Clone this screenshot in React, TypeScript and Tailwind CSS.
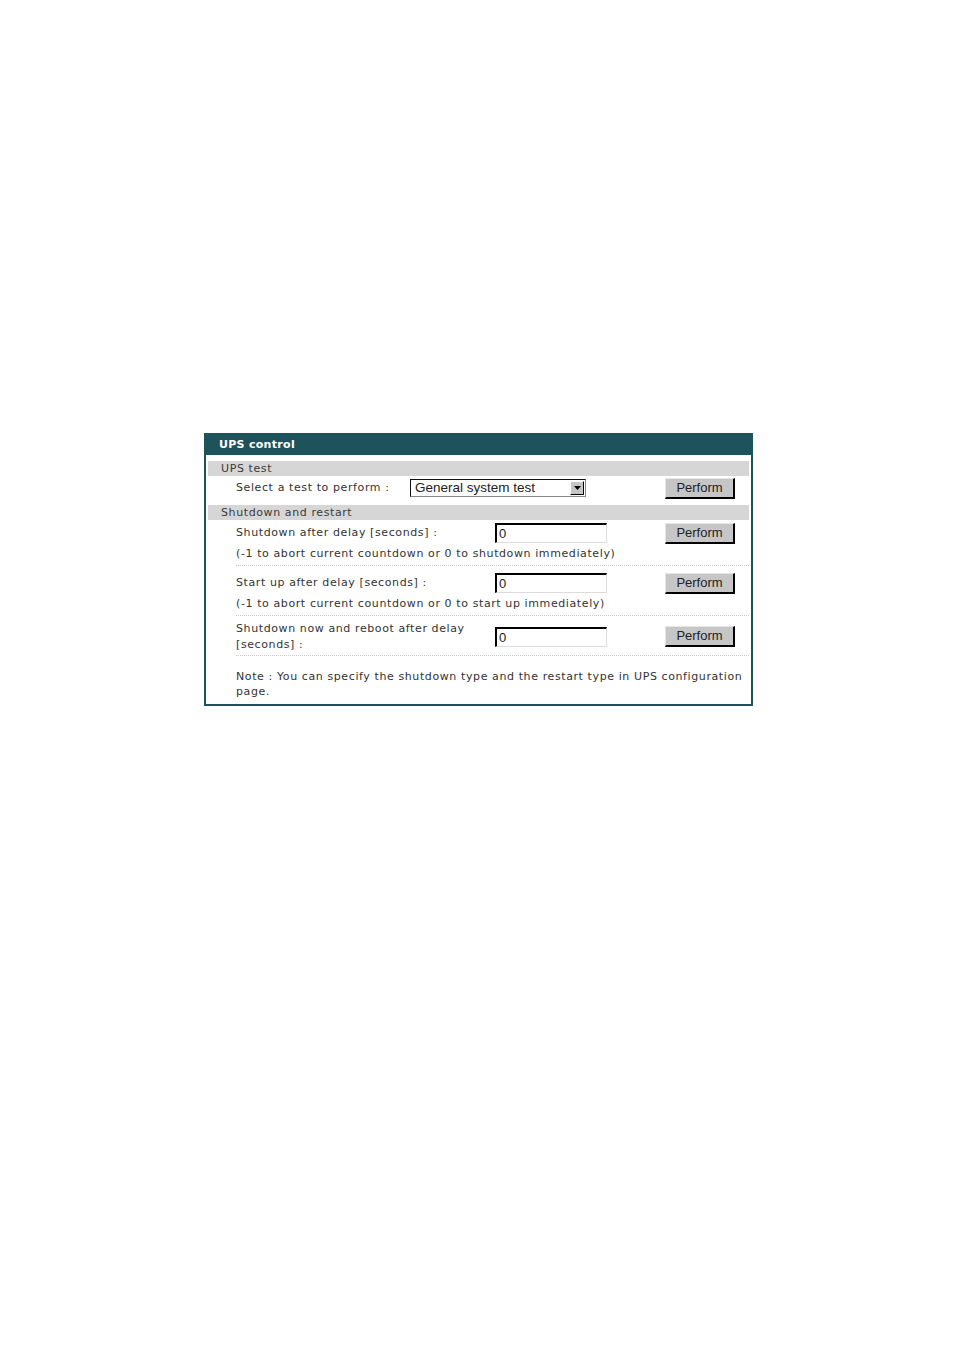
import React from "react";

const LABEL_FONT = "font-['DejaVu_Sans',Verdana,sans-serif]";
const CTRL_FONT = "font-['Liberation_Sans',Arial,sans-serif]";

function SectionBar({ title }: { title: string }) {
  return (
    <div className={`mx-[2px] flex h-[15px] items-center bg-[#d6d6d6] pl-[13px] text-[11px] leading-none tracking-[0.6px] text-[#3a3a3a] ${LABEL_FONT}`}>
      {title}
    </div>
  );
}

function PerformButton() {
  return (
    <button
      type="button"
      className={`flex h-[21px] w-[70px] items-center justify-center border border-t-[#e6e6e6] border-l-[#e6e6e6] border-r-[2px] border-b-[2px] border-r-black border-b-black bg-[#c6c6c6] pb-[1px] text-[13px] leading-none text-[#222] ${CTRL_FONT}`}
    >
      Perform
    </button>
  );
}

function NumberInput() {
  return (
    <div
      className={`flex h-[20px] w-[112px] items-center border border-t-[2px] border-l-[2px] border-t-black border-l-black border-r-[#dcdcdc] border-b-[#dcdcdc] bg-white pl-[2px] text-[13px] leading-none text-[#222] ${CTRL_FONT}`}
    >
      0
    </div>
  );
}

function Separator() {
  return <div className="ml-[30px] mr-[2px] border-t border-dotted border-[#c8c8c8]" />;
}

export default function App() {
  return (
    <div className="min-h-[1351px] w-full bg-white pt-[433px]">
      <div className="ml-[204px] w-[549px] border-2 border-[#1f535b] bg-white">
        {/* Header */}
        <div className={`flex h-[20px] items-center bg-[#1f535b] pl-[13px] text-[11px] font-bold tracking-[0.3px] text-white ${LABEL_FONT}`}>
          UPS control
        </div>

        <div className={`pt-[6px] text-[11px] tracking-[0.6px] text-[#333] ${LABEL_FONT}`}>
          <SectionBar title="UPS test" />

          {/* Select row */}
          <div className="flex h-[29px] items-center pb-[6px] pt-[1px]">
            <div className="w-[204px] pl-[30px]">Select a test to perform :</div>
            <div
              className={`flex h-[18px] w-[176px] items-center border border-t-[#111] border-l-[#111] border-r-[#888] border-b-[#888] bg-white pl-[4px] pr-[1px] text-[13.5px] leading-none tracking-normal text-[#222] ${CTRL_FONT}`}
            >
              <span className="flex-1">General system test</span>
              <span className="flex h-[14px] w-[14px] items-center justify-center border border-t-white border-l-white border-r-black border-b-black bg-[#c6c6c6]">
                <svg width="7" height="4" viewBox="0 0 7 4">
                  <path d="M0 0H7L3.5 4Z" fill="#000" />
                </svg>
              </span>
            </div>
            <div className="ml-[79px] tracking-normal">
              <PerformButton />
            </div>
          </div>

          <SectionBar title="Shutdown and restart" />

          {/* Shutdown after delay */}
          <div className="flex h-[24px] items-center pt-[2px]">
            <div className="w-[289px] pl-[30px]">Shutdown after delay [seconds] :</div>
            <NumberInput />
            <div className="ml-[58px] tracking-normal">
              <PerformButton />
            </div>
          </div>
          <div className="flex h-[21px] items-center pl-[30px]">
            (-1 to abort current countdown or 0 to shutdown immediately)
          </div>
          <Separator />

          {/* Start up after delay */}
          <div className="flex h-[28px] items-center pt-[6px]">
            <div className="w-[289px] pl-[30px]">Start up after delay [seconds] :</div>
            <NumberInput />
            <div className="ml-[58px] tracking-normal">
              <PerformButton />
            </div>
          </div>
          <div className="flex h-[21px] items-center pl-[30px]">
            (-1 to abort current countdown or 0 to start up immediately)
          </div>
          <Separator />

          {/* Shutdown now and reboot */}
          <div className="flex h-[39px] items-center pt-[2px]">
            <div className="w-[289px] pl-[30px] leading-[16px]">
              Shutdown now and reboot after delay
              <br />
              [seconds] :
            </div>
            <NumberInput />
            <div className="ml-[58px] tracking-normal">
              <PerformButton />
            </div>
          </div>
          <Separator />

          {/* Note */}
          <div className="whitespace-nowrap pb-[5px] pl-[30px] pt-[13px] leading-[15px]">
            Note : You can specify the shutdown type and the restart type in UPS configuration
            <br />
            page.
          </div>
        </div>
      </div>
    </div>
  );
}
